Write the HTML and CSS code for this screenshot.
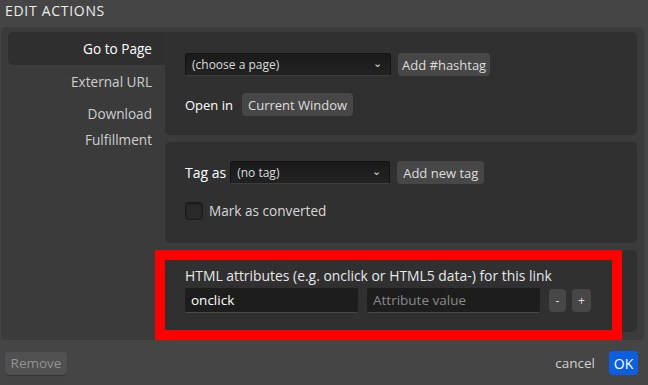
FILE: index.html
```html
<!DOCTYPE html>
<html lang="en">
<head>
    <meta charset="UTF-8">
    <title>Edit Actions</title>
    <link rel="stylesheet" href="styles.css">
</head>
<body>
    <div class="dialog-title">EDIT ACTIONS</div>

    <div class="dialog-body">
        <ul class="tabs">
            <li class="tab active">Go to Page</li>
            <li class="tab">External URL</li>
            <li class="tab tab-wrap">Download<br>Fulfillment</li>
        </ul>

        <div class="panels">
            <div class="panel panel-page">
                <div class="row">
                    <div class="select select-page">(choose a page)<span class="caret">&#8964;</span></div>
                    <button class="btn btn-hashtag">Add #hashtag</button>
                </div>
                <div class="row row-open">
                    <span class="label">Open in</span>
                    <button class="btn">Current Window</button>
                </div>
            </div>

            <div class="panel panel-tag">
                <div class="row">
                    <span class="label label-tag">Tag as</span>
                    <div class="select select-tag">(no tag)<span class="caret">&#8964;</span></div>
                    <button class="btn">Add new tag</button>
                </div>
                <label class="row row-check">
                    <span class="checkbox"></span>
                    <span>Mark as converted</span>
                </label>
            </div>

            <div class="panel panel-attrs">
                <div class="attrs-title">HTML attributes (e.g. onclick or HTML5 data-) for this link</div>
                <div class="row row-attrs">
                    <input class="field" type="text" value="onclick">
                    <input class="field" type="text" placeholder="Attribute value">
                    <button class="btn btn-small">-</button>
                    <button class="btn btn-small">+</button>
                </div>
            </div>
        </div>

        <div class="highlight"></div>
    </div>

    <div class="dialog-footer">
        <button class="btn btn-remove">Remove</button>
        <span class="spacer"></span>
        <a class="link-cancel">cancel</a>
        <button class="btn btn-ok">OK</button>
    </div>
</body>
</html>
```

FILE: styles.css
```css
* {
    margin: 0;
    padding: 0;
    box-sizing: border-box;
}

body {
    font-family: "Open Sans", "Noto Sans", sans-serif;
    font-size: 13px;
    background: #454545;
    color: #e6e6e6;
    width: 648px;
    height: 385px;
    overflow: hidden;
}

.dialog-title {
    height: 27px;
    padding: 1px 0 0 5px;
    font-size: 14px;
    letter-spacing: 0.7px;
    color: #ececec;
}

.dialog-body {
    position: relative;
    display: flex;
    height: 313px;
    margin: 0 4px 0 1px;
    padding: 5px 7px 8px 7px;
    background: #3b3b3b;
    border-radius: 4px;
}

.tabs {
    list-style: none;
    width: 157px;
    flex-shrink: 0;
    font-size: 13.6px;
}

.tab {
    height: 33px;
    line-height: 33px;
    padding-right: 13px;
    text-align: right;
    color: #cfcfcf;
    border-radius: 5px 0 0 5px;
}

.tab.active {
    background: #2f2f2f;
    color: #fff;
}

.tab-wrap {
    line-height: 26px;
    padding-top: 3px;
    height: auto;
}

.panels {
    flex: 1;
    display: flex;
    flex-direction: column;
    gap: 7px;
}

.panel {
    background: #303030;
    border-radius: 0 5px 5px 5px;
    padding: 0 20px;
}

.panel-page {
    height: 103px;
    padding-top: 21px;
}

.panel-tag {
    height: 101px;
    padding-top: 19px;
    border-radius: 5px;
}

.panel-attrs {
    height: 82px;
    padding-top: 16px;
    border-radius: 5px;
}

.row {
    display: flex;
    align-items: center;
    gap: 7px;
}

.row-open {
    margin-top: 17px;
    gap: 9px;
}

.row-check {
    margin-top: 17px;
    gap: 6px;
    color: #d8d8d8;
    font-size: 13.6px;
}

.label {
    color: #fff;
}

.label-tag {
    font-size: 14px;
}

.select {
    position: relative;
    height: 23px;
    line-height: 21px;
    padding-left: 6px;
    font-size: 12px;
    color: #dcdcdc;
    background: linear-gradient(#1a1a1a, #222);
    border: 1px solid #121212;
    border-bottom-color: #3e3e3e;
    border-radius: 3px;
}

.select-page {
    width: 206px;
}

.select-tag {
    width: 160px;
    margin-left: -3px;
}

.caret {
    position: absolute;
    right: 8px;
    top: -2px;
    font-size: 11px;
    color: #ddd;
}

.btn {
    font-family: inherit;
    font-size: 13px;
    height: 23px;
    padding: 0 6px;
    color: #dedede;
    background: #474747;
    border: none;
    border-radius: 4px;
}

.btn-hashtag {
    padding: 0 4px;
}

.attrs-title {
    color: #e8e8e8;
    font-size: 13.9px;
    margin-bottom: 3px;
}

.row-attrs {
    gap: 9px;
}

.field {
    width: 173px;
    height: 25px;
    padding: 0 6px;
    font-family: inherit;
    font-size: 13.5px;
    color: #fff;
    background: #1d1d1d;
    border: none;
    border-bottom: 1px solid #4a4a4a;
    border-radius: 2px;
    outline: none;
}

.field::placeholder {
    color: #8a8a8a;
}

.btn-small {
    width: 17px;
    height: 23px;
    padding: 0;
    font-size: 12px;
    margin-right: -3px;
}

.btn-small + .btn-small {
    width: 19px;
}

.checkbox {
    width: 18px;
    height: 18px;
    background: #2a2a2a;
    border: 1px solid #1a1a1a;
    border-radius: 4px;
    box-shadow: inset 0 1px 2px rgba(0,0,0,0.5);
}

.highlight {
    position: absolute;
    left: 154px;
    top: 223px;
    width: 467px;
    height: 90px;
    border: 10px solid #ff0000;
}

.dialog-footer {
    display: flex;
    align-items: center;
    height: 45px;
    padding: 1px 10px 0 5px;
}

.spacer {
    flex: 1;
}

.btn-remove {
    width: 62px;
    color: #939393;
    background: #505050;
    padding: 0;
    font-size: 13.5px;
    box-shadow: 0 1px 1px rgba(0,0,0,0.25);
}

.link-cancel {
    color: #d0d0d0;
    margin-right: 14px;
    font-size: 13.5px;
}

.btn-ok {
    width: 29px;
    height: 24px;
    padding: 0;
    color: #fff;
    font-size: 14px;
    background: #0b5fe0;
}
```
